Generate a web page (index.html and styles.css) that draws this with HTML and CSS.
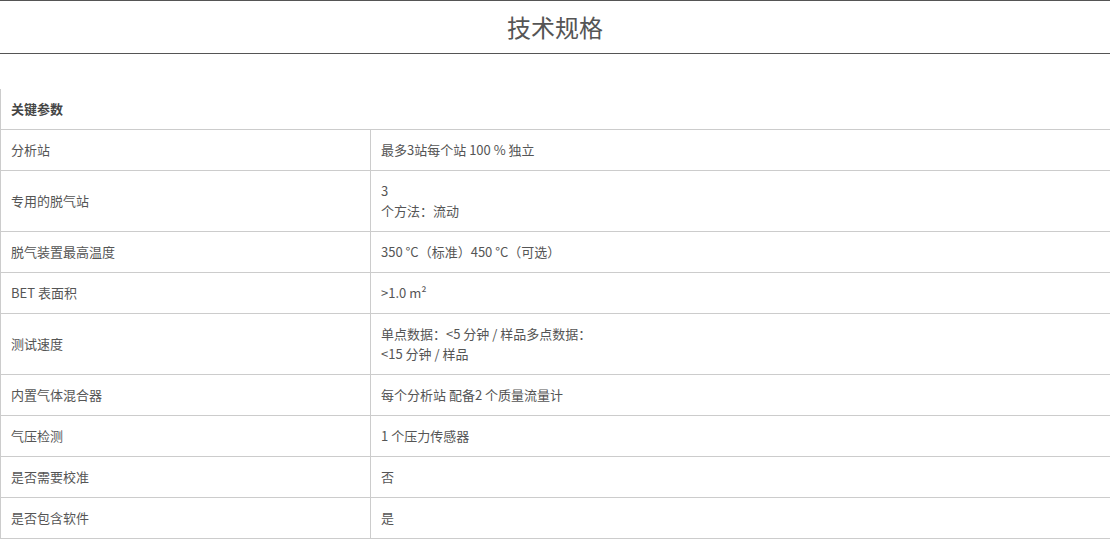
FILE: index.html
```html
<!DOCTYPE html>
<html lang="zh-CN">
<head>
<meta charset="utf-8">
<title>技术规格</title>
<link rel="stylesheet" href="styles.css">
</head>
<body>
<div class="page">
  <h2 class="title">技术规格</h2>
  <table class="specs">
    <tr class="head"><th colspan="2">关键参数</th></tr>
    <tr><td class="k">分析站</td><td class="v">最多3站每个站 100 % 独立</td></tr>
    <tr><td class="k">专用的脱气站</td><td class="v">3<br>个方法：流动</td></tr>
    <tr><td class="k">脱气装置最高温度</td><td class="v">350 °C（标准）450 °C（可选）</td></tr>
    <tr><td class="k">BET 表面积</td><td class="v">&gt;1.0 m²</td></tr>
    <tr><td class="k">测试速度</td><td class="v">单点数据：&lt;5 分钟 / 样品多点数据：<br>&lt;15 分钟 / 样品</td></tr>
    <tr><td class="k">内置气体混合器</td><td class="v">每个分析站 配备2 个质量流量计</td></tr>
    <tr><td class="k">气压检测</td><td class="v">1 个压力传感器</td></tr>
    <tr><td class="k">是否需要校准</td><td class="v">否</td></tr>
    <tr><td class="k">是否包含软件</td><td class="v">是</td></tr>
  </table>
</div>
</body>
</html>
```

FILE: styles.css
```css
html, body {
  margin: 0;
  padding: 0;
  background: #fff;
}
body {
  font-family: "Noto Sans CJK SC", "Liberation Sans", sans-serif;
  color: #555;
}
.page {
  width: 1110px;
}
.title {
  margin: 0;
  height: 52px;
  border-top: 1px solid #555;
  border-bottom: 1px solid #555;
  font-size: 24px;
  font-weight: normal;
  line-height: 51px;
  text-align: center;
  color: #555;
}
.specs {
  margin-top: 35px;
  width: 1110px;
  border-collapse: collapse;
  font-size: 13px;
  line-height: 20px;
  color: #555;
}
.specs th,
.specs td {
  padding: 10px;
  text-align: left;
  vertical-align: middle;
  border-left: 1px solid #ccc;
  border-bottom: 1px solid #ccc;
}
.specs .v {
  font-family: "Noto Sans CJK TC", "Liberation Sans", sans-serif;
}
.specs th {
  font-weight: bold;
  color: #444;
}
.specs .k {
  width: 349px;
}
```
